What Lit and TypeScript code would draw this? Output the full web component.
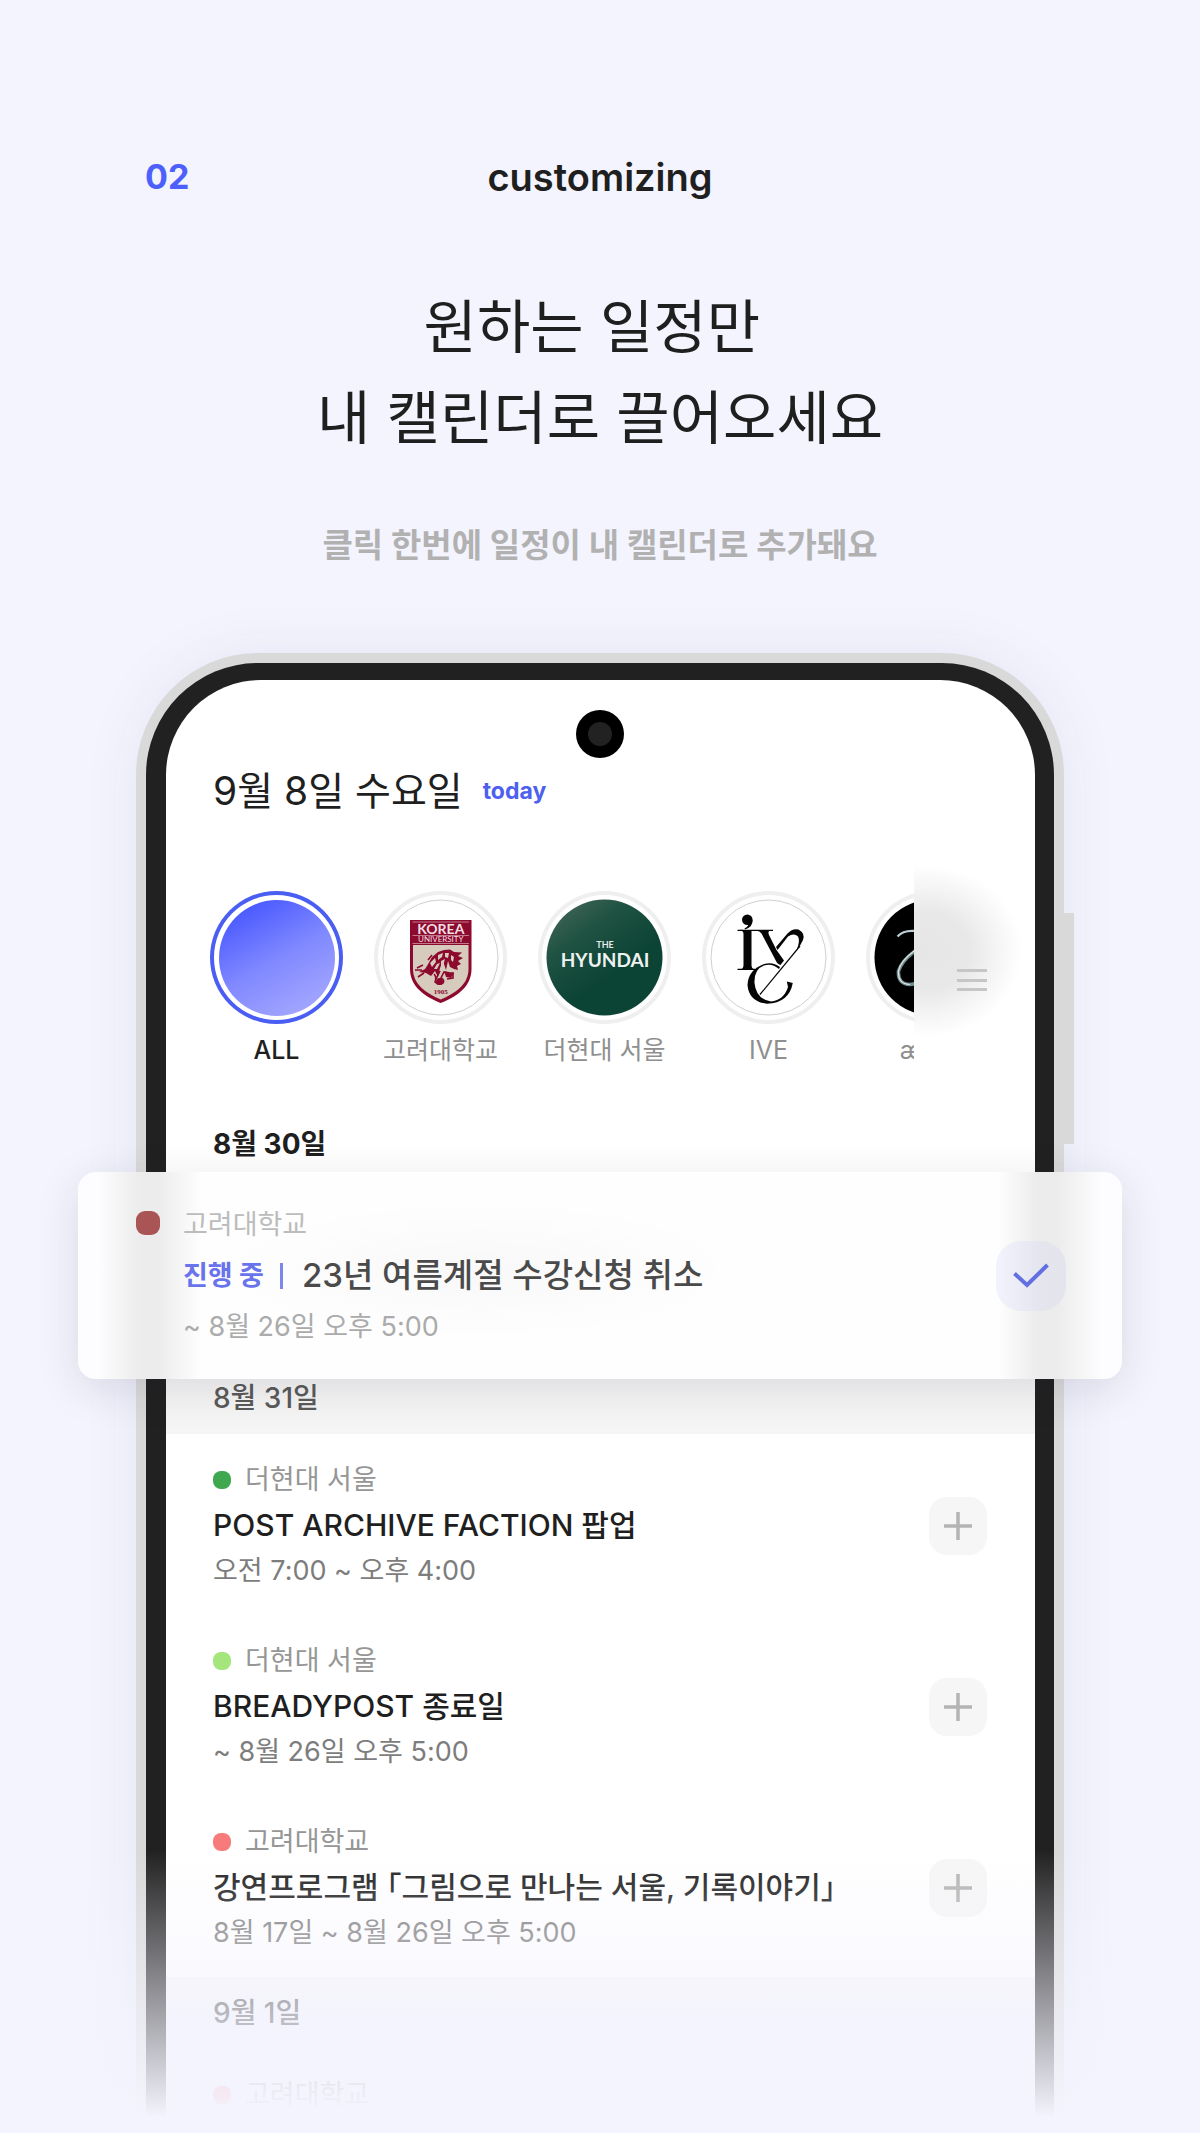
import { LitElement, html, css, svg, nothing } from "lit";
import { customElement, property } from "lit/decorators.js";
import { classMap } from "lit/directives/class-map.js";
import { styleMap } from "lit/directives/style-map.js";

const koreaLogo = svg`
  <path d="M36 29H97.500V78C97.500 95 84 105 66.700 112C49.500 105 36 95 36 78Z" fill="#8c0a2e"/>
  <path d="M39 54H94.500V78C94.500 93 82 102 66.700 108.500C51.500 102 39 93 39 78Z" fill="#d6cbbd"/>
  <path d="M38.500 31H95M38.500 44.500H95M38.500 52.500H95" stroke="#d9a9b4" stroke-width="0.700"/>
  <text x="66.800" y="42.800" class="ku">KOREA</text>
  <text x="66.800" y="51.200" class="univ">UNIVERSITY</text>
  <path d="M53 75L58 66L64 61L70 59L76 58.500L80 61L88 61.500L84 65L89 67L84 70L87 73L83 75L84 79L80 78L76 76L74 70L72 79L69 70L66 77L64 86L61 80L57 85L52 82L45 81L51 78Z" fill="#8c0a2e"/>
  <path d="M56 72L61 67L62 71L58 76ZM64 64L69 62L68 66L64 69ZM71 62L75 62L74 67L71 66ZM60 78L63 73L66 72L63 78ZM77 64L80 66L79 71L77 69ZM67 70L71 68L69 75L67 77Z" fill="#d6cbbd"/>
  <path d="M60 83Q63 86 61 91Q65 95 69 92Q71 89 67 87L70 81L75 83L79 82L79 87L73 88M66 80L62 88M58 64L54 69M49 74L43 77M48 79L41 79M50 82L44 86" fill="none" stroke="#8c0a2e" stroke-width="1.600"/>
  <circle cx="65.500" cy="90.500" r="3.500" fill="#8c0a2e"/><path d="M70 80L80 82L77 87L72 86Z" fill="#8c0a2e"/>
  <text x="66.800" y="103" class="year">1905</text>`;

const hyundaiLogo = svg`
  <defs><linearGradient id="hy" x1="0" y1="0" x2="0.500" y2="0.700">
    <stop offset="0" stop-color="#4b6a5c"/><stop offset="0.500" stop-color="#1f5242"/><stop offset="1" stop-color="#0b4335"/>
  </linearGradient></defs>
  <circle cx="66.500" cy="66.500" r="58" fill="url(#hy)"/>
  <text x="67" y="57" class="the">THE</text>
  <text x="67" y="75.500" class="hy">HYUNDAI</text>`;

const iveLogo = svg`
  <circle cx="45.300" cy="28.700" r="5.300" fill="#050505"/>
  <path d="M50.500 29Q51 36 43 38.500L42.500 37.500Q47 35.500 46.500 31Z" fill="#050505"/>
  <path d="M35.500 39.300H71M35.500 78.300H53" stroke="#050505" stroke-width="1.200"/>
  <path d="M38 38.800Q41.500 40 41.500 43V74Q41.500 78 38 78.600H53Q49.500 78 49.500 74V39.500Z" fill="#050505"/>
  <path d="M54 39.500H68Q65.500 40.500 67 44L74.500 59L82 69.500L78.500 74Q75 73 73.500 69L59.500 42.500Q58 39.800 54 39.500Z" fill="#050505"/>
  <path d="M74 56L85.500 42.500Q90.500 37 96.500 38.500Q103.500 42.500 101 49Q99 54 94.500 59Q98.500 50 96 45.500Q92 41.500 86 45.500L75.500 59Z" fill="#050505"/>
  <path d="M98 55L58 103.500" stroke="#050505" stroke-width="1.200" fill="none"/>
  <path d="M78 76Q71 70.500 62 73Q46 79 45.500 94Q47 111 65 112.700Q87 112 90.800 92L84.800 90.500L86 96Q82 109 69 110.500Q54 108 52.500 92Q52 78 62 74.500Q70 72 77 78Z" fill="#050505"/>`;

const aespaLogo = svg`
  <circle cx="66.500" cy="66.500" r="58" fill="#000"/>
  <path d="M31.500 45.500Q38 38 53 40.500" fill="none" stroke="#b9cdd3" stroke-width="2.200"/>
  <path d="M56 55Q36 68 32.500 80Q31.500 93 44 93.500Q50 93 55 90" fill="none" stroke="#6d8c93" stroke-width="3.600"/>
  <path d="M56 54.500Q35 68 32.500 80Q31.500 93 44 93.500" fill="none" stroke="#e6e1dc" stroke-width="1.200"/>`;

interface Channel { name: string; art: unknown; kind: string; }
const channels: Channel[] = [
  { name: "ALL", art: nothing, kind: "all" },
  { name: "고려대학교", art: koreaLogo, kind: "lined" },
  { name: "더현대 서울", art: hyundaiLogo, kind: "" },
  { name: "IVE", art: iveLogo, kind: "lined" },
  { name: "æspa", art: aespaLogo, kind: "" },
];

interface Plan { color: string; channel: string; title: string; time: string; }
const plans: Plan[] = [
  { color: "#3fa84f", channel: "더현대 서울", title: "POST ARCHIVE FACTION 팝업", time: "오전 7:00 ~ 오후 4:00" },
  { color: "#a4e57c", channel: "더현대 서울", title: "BREADYPOST 종료일", time: "~ 8월 26일 오후 5:00" },
  { color: "#f77b7b", channel: "고려대학교", title: "강연프로그램 ｢그림으로 만나는 서울, 기록이야기｣", time: "8월 17일 ~ 8월 26일 오후 5:00" },
];

const reset = css`
  * { box-sizing: border-box; }
  button { font: inherit; color: inherit; border: 0; padding: 0; margin: 0; background: none; cursor: pointer; }
  ul, h1, h2, h3, p { margin: 0; padding: 0; list-style: none; font-weight: inherit; font-size: inherit; }
  svg { display: block; }
`;

@customElement("channel-strip")
export class ChannelStrip extends LitElement {
  static styles = [reset, css`
    :host { display: flex; }
    .list { flex: 1; min-width: 0; display: flex; gap: 31px; padding-left: 44px; overflow: hidden; }
    .item { flex: none; width: 133px; display: flex; flex-direction: column; align-items: center; gap: 9px;
      font-size: 25px; line-height: 34px; color: #8f8f8f; white-space: nowrap; }
    .ring { width: 133px; height: 133px; border-radius: 50%; box-shadow: inset 0 0 0 4px #efefef; display: grid; place-items: center; }
    .ring svg { width: 133px; height: 133px; }
    .face { width: 116px; height: 116px; border-radius: 50%; background: linear-gradient(150deg, #4757ff 10%, #7f88ff 50%, #a9abff 95%); }
    .item.all { color: #1f1f1f; font-weight: 500; }
    .all .ring { box-shadow: inset 0 0 0 4px #4b5ef3; }
    .outline { fill: none; stroke: #cfcfcf; stroke-width: 1; }
    text { text-anchor: middle; font-family: Lato, sans-serif; fill: #fff; }
    .ku { font-size: 14px; font-weight: 700; fill: #f3dfe3; }
    .univ { font-size: 8px; fill: #f3dfe3; }
    .year { font-family: "Liberation Serif", serif; font-size: 7px; font-weight: 700; fill: #8c0a2e; }
    .the { font-size: 9px; font-weight: 700; fill: #e4eae7; }
    .hy { font-size: 19px; font-weight: 700; fill: #eef2f0; }
    .more { width: 121px; margin: -26px 0 -14px; padding: 100px 0 0 43px;
      background: radial-gradient(ellipse 96px 86px at 12px 86px, #e6e6e6, #e8e8e8 45%, #f5f5f5 75%, #fff 100%); }
    .more button { width: 30px; height: 30px; }
  `];

  render() {
    return html`
      <div class="list">
        ${channels.map((c) => html`
          <button class=${classMap({ item: true, all: c.kind === "all" })}>
            <span class="ring">
              ${c.kind === "all" ? html`<span class="face"></span>` : html`
                <svg viewBox="0 0 133 133" aria-hidden="true">
                  ${c.kind === "lined" ? svg`<circle class="outline" cx="66.500" cy="66.500" r="57.500"/>` : nothing}
                  ${c.art}
                </svg>`}
            </span>
            <span>${c.name}</span>
          </button>`)}
      </div>
      <div class="more">
        <button aria-label="메뉴">
          <svg width="30" height="30" viewBox="0 0 30 30" stroke="#c6c6c6" stroke-width="3">
            <path d="M0 5.500H30M0 15.500H30M0 24.500H30"/>
          </svg>
        </button>
      </div>`;
  }
}

@customElement("plan-item")
export class PlanItem extends LitElement {
  @property({ attribute: false }) plan!: Plan;
  @property({ type: Boolean }) brief = false;

  static styles = [reset, css`
    :host { display: block; }
    .row { display: flex; align-items: center; justify-content: space-between; padding: 23px 48px 20px 47px; }
    .line { line-height: 46px; font-size: 27px; color: #7d7d7d; white-space: nowrap; }
    .channel { display: flex; align-items: center; gap: 14px; color: #969696; }
    .dot { width: 18px; height: 18px; border-radius: 8px; }
    .title { font-size: 30px; line-height: 44px; font-weight: 500; color: #1f1f1f; }
    .time { line-height: 48px; }
    .add { width: 58px; height: 58px; border-radius: 18px; background: #f6f6f6; display: grid; place-items: center; }
  `];

  render() {
    const p = this.plan;
    return html`<div class="row">
      <div>
        <p class="line channel"><span class="dot" style=${styleMap({ background: p.color })}></span>${p.channel}</p>
        ${this.brief ? nothing : html`
          <h3 class="line title">${p.title}</h3>
          <p class="line time">${p.time}</p>`}
      </div>
      ${this.brief ? nothing : html`
        <button class="add" aria-label="내 캘린더에 추가">
          <svg width="28" height="28" viewBox="0 0 28 28" stroke="#b4b4b4" stroke-width="3.500"><path d="M14 0V28M0 14H28"/></svg>
        </button>`}
    </div>`;
  }
}

@customElement("picked-card")
export class PickedCard extends LitElement {
  static styles = [reset, css`
    :host { display: block; }
    .card { display: grid; grid-template-columns: 24px 1fr 70px; column-gap: 23px; padding: 27px 56px 27px 58px;
      border-radius: 18px; box-shadow: 0 10px 44px rgba(30, 30, 60, 0.12);
      background:
        radial-gradient(ellipse 260px 70px at 400px 98px, rgba(0, 0, 0, 0.022), transparent),
        linear-gradient(to right, #fdfdff 20px, #ececec 62px, #ececec 80px, #fefefe 124px, transparent 124px),
        linear-gradient(to left, #fdfdff 20px, #ececec 65px, #ececec 85px, #fefefe 124px); }
    .line { line-height: 51px; font-size: 27px; color: #ababab; white-space: nowrap; }
    .channel { color: #bcbcbc; }
    .dot { width: 24px; height: 24px; border-radius: 9px; background: #a95455; margin-top: 12px; }
    .main { display: flex; align-items: center; }
    .state { font-weight: 700; color: #6974ec; }
    .bar { width: 3px; height: 26px; background: #7d87ea; margin: 0 19px 0 16px; }
    .title { font-size: 33px; font-weight: 500; color: #4a4a4a; }
    .check { width: 70px; height: 70px; border-radius: 25px; background: linear-gradient(to right, #f2f3fd, #e5e5ef 60%, #e4e4ec);
      display: grid; place-items: center; align-self: center; }
  `];

  render() {
    return html`<div class="card">
      <span class="dot"></span>
      <div>
        <p class="line channel">고려대학교</p>
        <div class="line main"><span class="state">진행 중</span><span class="bar"></span><h3 class="title">23년 여름계절 수강신청 취소</h3></div>
        <p class="line">~ 8월 26일 오후 5:00</p>
      </div>
      <button class="check" aria-label="추가됨">
        <svg width="36" height="26" viewBox="0 0 36 26" fill="none" stroke="#626fe0" stroke-width="4"><path d="M1.500 10.500L14 22L34.500 2"/></svg>
      </button>
    </div>`;
  }
}

@customElement("app-root")
export class AppRoot extends LitElement {
  static styles = [reset, css`
    :host { display: block; font-family: Inter, "Noto Sans CJK KR", sans-serif; color: #1f1f1f; }
    .page { position: relative; min-height: 100vh; overflow: hidden; background: #f4f4fe; padding-top: 155px;
      display: flex; flex-direction: column; }
    .top { display: grid; grid-template-columns: 1fr auto 1fr; padding: 0 145px; font-size: 38px; line-height: 44px; font-weight: 600; }
    .number { color: #4d60fb; font-size: 34px; font-weight: 700; }
    .headline { margin-top: 83px; text-align: center; font-size: 58px; line-height: 91px; font-weight: 400; }
    .sub { margin-top: 61px; text-align: center; font-size: 33px; line-height: 40px; font-weight: 700; color: #b1b1b2; }
    .phone { position: relative; flex: 1; margin: 88px 136px 0; padding: 10px 10px 0; background: #d9d9d9;
      border-radius: 122px 122px 0 0; box-shadow: 0 0 60px rgba(50, 50, 110, 0.07); }
    .side { position: absolute; top: 260px; right: -10px; width: 10px; height: 231px; background: #d9d9d9; }
    .bezel { height: 100%; padding: 17px 19px 0 20px; background: #212121; border-radius: 112px 112px 0 0; }
    .screen { height: 100%; background: #fff; border-radius: 95px 95px 0 0; padding-top: 86px; }
    .camera { position: absolute; top: 57px; left: 50%; width: 48px; height: 48px; margin-left: -24px; border-radius: 50%;
      background: #000; display: grid; place-items: center; }
    .camera::after { content: ""; width: 24px; height: 24px; border-radius: 50%; background: #222; }
    .date { display: flex; align-items: center; gap: 20px; padding: 0 47px; line-height: 50px; font-size: 39px; }
    .today { font-size: 23px; font-weight: 700; color: #4d60f0; }
    channel-strip { margin-top: 75px; margin-bottom: 41px; }
    .day { padding: 0 47px; line-height: 72px; font-size: 28px; font-weight: 500; background: #f5f5f5; color: #5a5a5a; }
    .day.current { background: none; color: #1f1f1f; font-weight: 700; }
    .day.next { background: linear-gradient(#f5f5f7 30%, #f4f4fe 55%); }
    .day.next + plan-item { background: #f4f4fe; }
    picked-card { position: relative; margin: -8px -87px -17px -88px; }
    .fade { position: absolute; left: 0; right: 0; bottom: 0; height: 288px; pointer-events: none;
      background: linear-gradient(to bottom, rgba(244, 244, 254, 0), #f4f4fe 267px); }
  `];

  render() {
    return html`<main class="page">
      <header class="top"><span class="number">02</span><span>customizing</span></header>
      <h1 class="headline">원하는 일정만&nbsp;<br>내 캘린더로 끌어오세요</h1>
      <p class="sub">클릭 한번에 일정이 내 캘린더로 추가돼요</p>
      <section class="phone">
        <span class="side"></span>
        <span class="camera"></span>
        <div class="bezel"><div class="screen">
          <div class="date"><h2>9월 8일 수요일</h2><button class="today">today</button></div>
          <channel-strip></channel-strip>
          <h2 class="day current">8월 30일</h2>
          <picked-card></picked-card>
          <h2 class="day">8월 31일</h2>
          ${plans.map((p) => html`<plan-item .plan=${p}></plan-item>`)}
          <h2 class="day next">9월 1일</h2>
          <plan-item brief .plan=${plans[2]}></plan-item>
        </div></div>
      </section>
      <div class="fade"></div>
    </main>`;
  }
}
